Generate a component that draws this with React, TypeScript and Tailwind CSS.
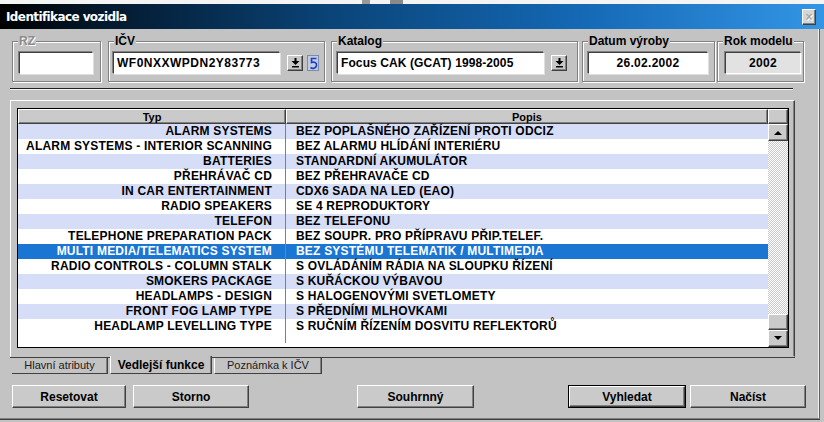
import React from "react";

const rows: [string, string][] = [
  ["ALARM SYSTEMS", "BEZ POPLAŠNÉHO ZAŘÍZENÍ PROTI ODCIZ"],
  ["ALARM SYSTEMS - INTERIOR SCANNING", "BEZ ALARMU HLÍDÁNÍ INTERIÉRU"],
  ["BATTERIES", "STANDARDNÍ AKUMULÁTOR"],
  ["PŘEHRÁVAČ CD", "BEZ PŘEHRAVAČE CD"],
  ["IN CAR ENTERTAINMENT", "CDX6 SADA NA LED (EAO)"],
  ["RADIO SPEAKERS", "SE 4 REPRODUKTORY"],
  ["TELEFON", "BEZ TELEFONU"],
  ["TELEPHONE PREPARATION PACK", "BEZ SOUPR. PRO PŘÍPRAVU PŘIP.TELEF."],
  ["MULTI MEDIA/TELEMATICS SYSTEM", "BEZ SYSTÉMU TELEMATIK / MULTIMEDIA"],
  ["RADIO CONTROLS - COLUMN STALK", "S OVLÁDÁNÍM RÁDIA NA SLOUPKU ŘÍZENÍ"],
  ["SMOKERS PACKAGE", "S KUŘÁCKOU VÝBAVOU"],
  ["HEADLAMPS - DESIGN", "S HALOGENOVÝMI SVETLOMETY"],
  ["FRONT FOG LAMP TYPE", "S PŘEDNÍMI MLHOVKAMI"],
  ["HEADLAMP LEVELLING TYPE", "S RUČNÍM ŘÍZENÍM DOSVITU REFLEKTORŮ"],
];

const raised =
  "border border-t-white border-l-white border-r-[#404040] border-b-[#404040] shadow-[inset_-1px_-1px_0_#808080]";
const sunken =
  "border border-t-[#404040] border-l-[#404040] border-r-white border-b-white shadow-[-1px_-1px_0_#808080,1px_1px_0_#dfdfdf]";

function DropIcon() {
  return (
    <svg width="9" height="10" viewBox="0 0 9 10">
      <rect x="3.5" y="0" width="2" height="3" fill="#000" />
      <polygon points="0.5,3 8.5,3 4.5,7" fill="#000" />
      <rect x="1" y="8" width="7" height="1.5" fill="#000" />
    </svg>
  );
}

function DropButton() {
  return (
    <div className={`w-[16px] h-[16px] bg-[#c8c8c8] flex items-center justify-center ${raised}`}>
      <DropIcon />
    </div>
  );
}

function GroupBox({
  label,
  width,
  ml,
  disabled,
  children,
}: {
  label: string;
  width: string;
  ml: string;
  disabled?: boolean;
  children: React.ReactNode;
}) {
  return (
    <div
      className={`relative h-[41px] ${width} ${ml} border border-[#808080] shadow-[inset_1px_1px_0_#fff,1px_1px_0_#fff] flex items-start pt-[10px]`}
    >
      <span
        className={`absolute -top-[8px] left-[5px] px-[1px] bg-[#c3c3c3] text-[12px] leading-[14px] font-bold ${
          disabled ? "text-[#8c8c8c] [text-shadow:1px_1px_0_#fff]" : "text-black"
        }`}
      >
        {label}
      </span>
      {children}
    </div>
  );
}

export default function App() {
  return (
    <div className="w-[824px] h-[422px] overflow-hidden bg-[#c3c3c3] font-['Liberation_Sans',Arial,sans-serif] text-black select-none">
      {/* top strip */}
      <div className="h-[4px] bg-[#f4f4f4] flex">
        <div className="ml-[362px] w-[8px] bg-[#9a9a9a]" />
        <div className="ml-[20px] w-[13px] bg-[#8a8a8a]" />
      </div>
      {/* title bar */}
      <div className="h-[25px] bg-[linear-gradient(to_right,#000000_0%,#03182c_12%,#0a4478_40%,#1468b4_70%,#3395e6_100%)] flex items-center justify-between pl-[6px] pr-[8px]">
        <span className="text-white font-bold text-[12px] leading-[14px] font-['DejaVu_Sans',sans-serif] tracking-[-0.6px]">
          Identifikace vozidla
        </span>
        <div className={`w-[14px] h-[16px] bg-[#d6d6d6] flex items-center justify-center ${raised}`}>
          <span className="text-[#a8a8a8] text-[12px] leading-[12px] font-bold [text-shadow:1px_1px_0_#fff]">×</span>
        </div>
      </div>
      {/* body */}
      <div className="w-[819px] h-[389px] border-r border-r-[#f0f0f0] shadow-[1px_0_0_#606060] flex flex-col">
        {/* group row */}
        <div className="flex pt-[12px] pl-[12px]">
          <GroupBox label="RZ" width="w-[89px]" ml="ml-0" disabled>
            <div className={`ml-[6px] w-[74px] h-[22px] bg-white ${sunken}`} />
          </GroupBox>
          <GroupBox label="IČV" width="w-[217px]" ml="ml-[7px]">
            <div className={`ml-[4px] w-[167px] h-[22px] bg-white ${sunken} flex items-center pl-[3px] text-[12px] font-bold tracking-[0.5px]`}>
              WF0NXXWPDN2Y83773
            </div>
            <div className="ml-[7px] mt-[3px]">
              <DropButton />
            </div>
            <div className="ml-[4px] mt-[3px] w-[12px] h-[16px] bg-[#c4cce0] border border-[#7b8bb0] flex items-center justify-center">
              <svg width="9" height="13" viewBox="0 0 9 13">
                <path d="M7.5 1.5 H2.5 V5.5 C5 4.5 8 5.5 7.5 8.5 C7 11.5 3.5 12 1.5 10.5" fill="none" stroke="#1c3fc8" strokeWidth="1.6" />
              </svg>
            </div>
          </GroupBox>
          <GroupBox label="Katalog" width="w-[247px]" ml="ml-[6px]">
            <div className={`ml-[5px] w-[207px] h-[22px] bg-white ${sunken} flex items-center pl-[3px] text-[12px] font-bold tracking-[0.1px]`}>
              Focus CAK (GCAT) 1998-2005
            </div>
            <div className="ml-[7px] mt-[3px]">
              <DropButton />
            </div>
          </GroupBox>
          <GroupBox label="Datum výroby" width="w-[133px]" ml="ml-[4px]">
            <div className={`ml-[5px] w-[120px] h-[22px] bg-white ${sunken} flex items-center justify-center text-[12px] font-bold tracking-[0.3px]`}>
              26.02.2002
            </div>
          </GroupBox>
          <GroupBox label="Rok modelu" width="w-[87px]" ml="ml-[2px]">
            <div className={`ml-[7px] w-[76px] h-[22px] bg-[#e2e2e2] ${sunken} flex items-center justify-center text-[12px] font-bold tracking-[0.3px]`}>
              2002
            </div>
          </GroupBox>
        </div>
        {/* separator line */}
        <div className="ml-[10px] mt-[6px] w-[783px] h-[2px] border-t border-t-[#202020] border-b border-b-[#f4f4f4]" />
        {/* tab panel */}
        <div className="ml-[10px] mt-[10px] w-[785px] h-[257px] border border-t-white border-l-white border-r-[#404040] border-b-[#c3c3c3] shadow-[inset_-1px_0_0_#808080] pt-[7px] pl-[6px]">
          <div className="w-[772px] h-[240px] border border-black bg-white flex flex-col">
            {/* header */}
            <div className="h-[15px] flex bg-[#cacaca] text-[11px] leading-[12px] font-bold">
              <div className={`w-[268px] flex items-center justify-center ${raised}`}>Typ</div>
              <div className={`w-[482px] flex items-center justify-center ${raised}`}>Popis</div>
              <div className={`flex-1 ${raised}`} />
            </div>
            <div className="flex flex-1">
              <div className="w-[750px] flex flex-col">
                {rows.map(([t, p], i) => {
                  const sel = i === 8;
                  const bg = sel ? "bg-[#1a76d2] text-white" : i % 2 === 0 ? "bg-[#d5ddf7]" : "bg-white";
                  return (
                    <div key={i} className={`h-[15px] flex text-[12px] leading-[15px] font-bold tracking-[0.2px] ${bg}`}>
                      <div className="w-[268px] text-right pr-[13px] border-r border-r-[#808080] whitespace-nowrap">{t}</div>
                      <div className="flex-1 pl-[10px] whitespace-nowrap">{p}</div>
                    </div>
                  );
                })}
                <div className="flex-1 flex">
                  <div className="w-[268px] h-[9px] border-r border-r-[#808080]" />
                </div>
              </div>
              {/* scrollbar */}
              <div className="flex-1 flex flex-col bg-[repeating-conic-gradient(#c8c8c8_0%_25%,#ffffff_0%_50%)] bg-[length:2px_2px]">
                <div className={`h-[17px] bg-[#cacaca] flex items-center justify-center ${raised}`}>
                  <svg width="8" height="5" viewBox="0 0 8 5"><polygon points="0,5 8,5 4,1" fill="#000" /></svg>
                </div>
                <div className="flex-1" />
                <div className={`h-[16px] bg-[#cacaca] ${raised}`} />
                <div className={`h-[17px] bg-[#cacaca] flex items-center justify-center ${raised}`}>
                  <svg width="8" height="5" viewBox="0 0 8 5"><polygon points="0,0 8,0 4,4" fill="#000" /></svg>
                </div>
              </div>
            </div>
          </div>
        </div>
        {/* tabs */}
        <div className="ml-[10px] flex h-[17px] w-[785px] border-t border-t-[#404040]">
          <div className="ml-[2px] w-[96px] h-[16px] flex items-center justify-center text-[11px] leading-[13px] text-[#202020] border-r border-r-[#404040] border-b border-b-[#404040] shadow-[inset_-1px_0_0_#808080]">
            Hlavní atributy
          </div>
          <div className="-mt-[2px] ml-[2px] w-[102px] h-[18px] bg-[#c3c3c3] flex items-center justify-center text-[12px] leading-[14px] font-bold border-l border-l-white border-r border-r-[#404040] border-b border-b-[#404040] shadow-[inset_-1px_0_0_#808080]">
            Vedlejší funkce
          </div>
          <div className="ml-[2px] w-[108px] h-[16px] flex items-center justify-center text-[11px] leading-[13px] text-[#202020] border-l border-l-white border-r border-r-[#404040] border-b border-b-[#404040] shadow-[inset_-1px_0_0_#808080]">
            Poznámka k IČV
          </div>
        </div>
        {/* buttons */}
        <div className="flex mt-[11px] pl-[12px] text-[12px] font-bold">
          <div className={`w-[114px] h-[23px] bg-[#cacaca] flex items-center justify-center ${raised}`}>Resetovat</div>
          <div className={`ml-[7px] w-[116px] h-[23px] bg-[#cacaca] flex items-center justify-center ${raised}`}>Storno</div>
          <div className={`ml-[108px] w-[117px] h-[23px] bg-[#cacaca] flex items-center justify-center ${raised}`}>Souhrnný</div>
          <div className="ml-[94px] w-[118px] h-[23px] border border-black">
            <div className={`w-full h-full bg-[#cacaca] flex items-center justify-center ${raised}`}>Vyhledat</div>
          </div>
          <div className={`ml-[4px] w-[116px] h-[23px] bg-[#cacaca] flex items-center justify-center ${raised}`}>Načíst</div>
        </div>
      </div>
      {/* bottom edge */}
      <div className="w-[820px] h-[1px] bg-[#808080]" />
      <div className="w-[820px] h-[1px] bg-[#404040]" />
    </div>
  );
}
